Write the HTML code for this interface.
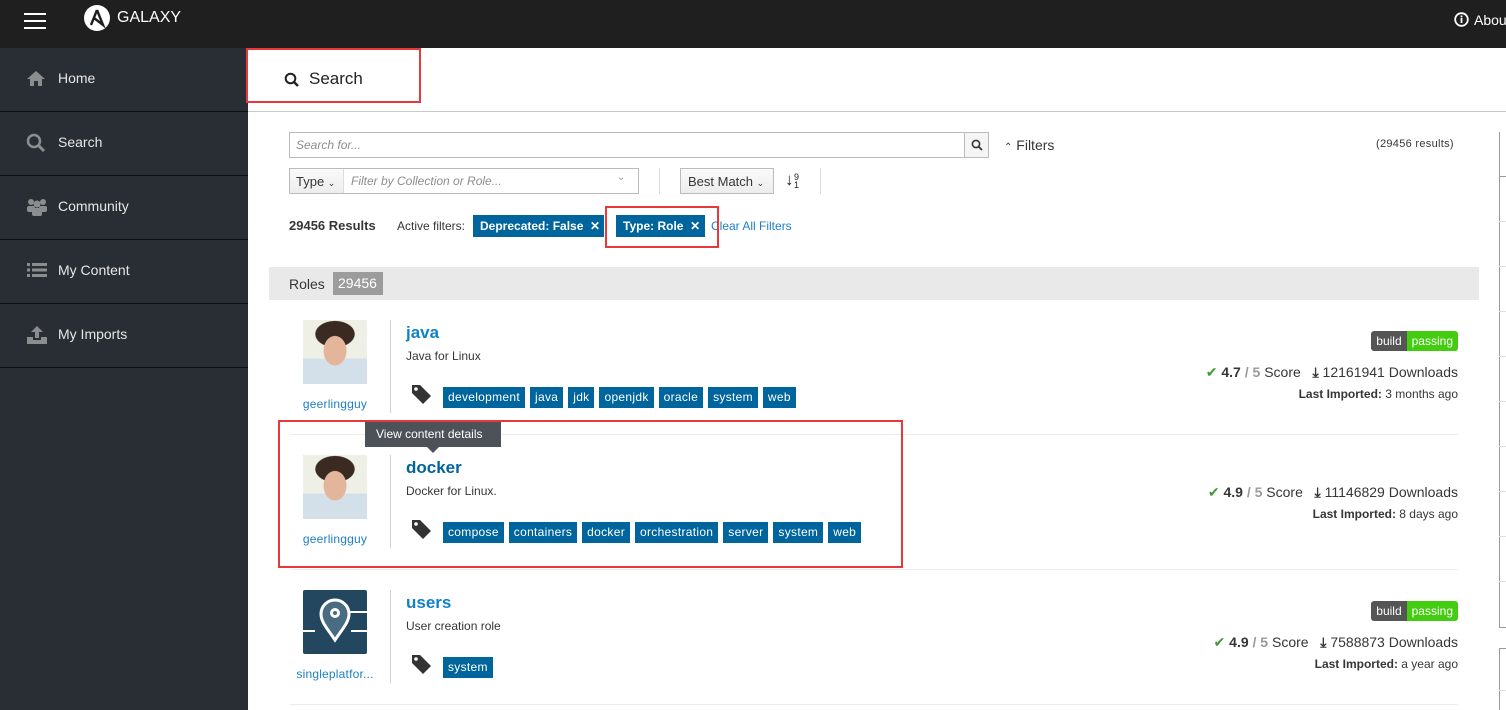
<!DOCTYPE html>
<html><head><meta charset="utf-8"><style>
*{box-sizing:border-box;margin:0;padding:0}
body{width:1506px;height:710px;overflow:hidden;font-family:"Liberation Sans",sans-serif;background:#fff;color:#363636;position:relative;font-size:12px}
.abs{position:absolute}
.top{left:0;top:0;width:1506px;height:48px;background:#1f1f1f}
.side{left:0;top:48px;width:248px;height:662px;background:#292e34}
.si{position:absolute;left:0;width:248px;height:64px;border-bottom:1px solid #0e0f11;color:#e6e6e6;font-size:14px}
.si span{position:absolute;left:58px;top:22px}
.si svg{position:absolute;left:26px;top:21px}
.tag{display:inline-block;background:#00659c;color:#fff;font-size:12px;height:21px;line-height:21px;padding:0 5px;margin-right:5px;letter-spacing:0.3px}
.tags{position:absolute;left:443px;white-space:nowrap}
.av{position:absolute;left:303px;width:64px;height:64px;background:radial-gradient(ellipse 14px 18px at 50% 48%,#e3b69c 80%,transparent 84%),radial-gradient(ellipse 24px 16px at 50% 22%,#3a2a22 80%,transparent 84%),linear-gradient(#eef0e6 0 60%,#d3e0ea 60%)}
.user{position:absolute;left:290px;width:90px;text-align:center;color:#1c7fc2;font-size:12px;letter-spacing:0.2px}
.vl{position:absolute;left:390px;width:1px;background:#d1d1d1}
.title{position:absolute;left:406px;font-size:17px;font-weight:bold;color:#0f82c9}
.desc{position:absolute;left:406px;font-size:12px;color:#363636}
.sep{position:absolute;left:290px;width:1168px;height:1px;background:#ededed}
.right{position:absolute;right:48px;text-align:right;white-space:nowrap}
.badge{position:absolute;right:48px;height:20px;font-size:12px;border-radius:3px;overflow:hidden;display:flex}
.badge b{font-weight:normal;background:#555;color:#fff;padding:0 5px;line-height:20px}
.badge i{font-style:normal;background:#4c1;color:#fff;padding:0 5px;line-height:20px}
.score{font-size:14px;color:#363636}
.red{position:absolute;border:2px solid #e8383b}
.tick{position:absolute;left:1499px;width:7px;height:1px;background:#ddd}
</style></head><body>
<div class="abs top"></div>
<div class="abs" style="left:24px;top:13px;width:22px;height:2px;background:#fff;box-shadow:0 7px 0 #fff,0 14px 0 #fff"></div>
<svg class="abs" style="left:83px;top:4px" width="28" height="28" viewBox="0 0 28 28"><circle cx="14" cy="14" r="13" fill="#fff"/><path d="M14 6 L8 21 M14 6 L20 21 L11 14" stroke="#1f1f1f" stroke-width="2.4" fill="none"/></svg>
<div class="abs" style="left:117px;top:9px;color:#fff;font-size:16px">GALAXY</div>
<svg class="abs" style="left:1454px;top:12px" width="15" height="15"><circle cx="7.5" cy="7.5" r="6.3" fill="none" stroke="#fff" stroke-width="1.8"/><rect x="6.6" y="6" width="1.8" height="5" fill="#fff"/><rect x="6.6" y="3.5" width="1.8" height="1.8" fill="#fff"/></svg>
<div class="abs" style="left:1474px;top:12px;color:#fff;font-size:14px">Abou</div>

<div class="abs side"></div>
<div class="si" style="top:48px;height:64px"><svg width="20" height="18"><path d="M10 2 L1 10 H4 V17 H8 V12 H12 V17 H16 V10 H19 Z" fill="#8b8d8f"/></svg><span>Home</span></div>
<div class="si" style="top:112px"><svg width="20" height="20"><circle cx="8" cy="8" r="6" fill="none" stroke="#8b8d8f" stroke-width="2.5"/><path d="M12.5 12.5 L18 18" stroke="#8b8d8f" stroke-width="3"/></svg><span>Search</span></div>
<div class="si" style="top:176px"><svg width="22" height="20"><circle cx="5" cy="5" r="3" fill="#8b8d8f"/><circle cx="17" cy="5" r="3" fill="#8b8d8f"/><circle cx="11" cy="7" r="3.5" fill="#8b8d8f"/><rect x="1" y="9" width="8" height="6" rx="2" fill="#8b8d8f"/><rect x="13" y="9" width="8" height="6" rx="2" fill="#8b8d8f"/><rect x="6" y="11" width="10" height="8" rx="2" fill="#8b8d8f"/></svg><span>Community</span></div>
<div class="si" style="top:240px"><svg width="22" height="18"><path d="M1 2h3v3H1zM6 2h15v3H6zM1 7.5h3v3H1zM6 7.5h15v3H6zM1 13h3v3H1zM6 13h15v3H6z" fill="#8b8d8f"/></svg><span>My Content</span></div>
<div class="si" style="top:304px"><svg width="22" height="20"><path d="M11 1 L5 7 H9 V13 H13 V7 H17 Z M1 12 H7 V15 H15 V12 H21 V19 H1 Z" fill="#8b8d8f"/></svg><span>My Imports</span></div>

<div class="abs" style="left:248px;top:111px;width:1258px;height:1px;background:#c8c8c8"></div>
<svg class="abs" style="left:284px;top:72px" width="16" height="16"><circle cx="6.5" cy="6.5" r="4.8" fill="none" stroke="#222" stroke-width="2"/><path d="M10 10 L14 14" stroke="#222" stroke-width="2.4"/></svg>
<div class="abs" style="left:309px;top:69px;font-size:17px;color:#222">Search</div>
<div class="red" style="left:246px;top:48px;width:175px;height:55px"></div>

<div class="abs" style="left:289px;top:132px;width:700px;height:26px;border:1px solid #bbb"></div>
<div class="abs" style="left:296px;top:138px;font-size:12px;font-style:italic;color:#8b8d8f">Search for...</div>
<div class="abs" style="left:964px;top:132px;width:25px;height:26px;border:1px solid #bbb;background:#f5f5f5"></div>
<svg class="abs" style="left:971px;top:139px" width="12" height="12"><circle cx="5" cy="5" r="3.6" fill="none" stroke="#333" stroke-width="1.6"/><path d="M7.6 7.6 L11 11" stroke="#333" stroke-width="1.8"/></svg>
<div class="abs" style="left:1004px;top:137px;font-size:14px;color:#363636"><span style="font-size:10px">&#8963;</span> Filters</div>
<div class="abs" style="left:1376px;top:138px;font-size:11px;color:#363636;letter-spacing:0.3px">(29456 results)</div>

<div class="abs" style="left:289px;top:168px;width:350px;height:26px;border:1px solid #bbb"></div>
<div class="abs" style="left:290px;top:169px;width:54px;height:24px;background:linear-gradient(#fafafa,#ededed);border-right:1px solid #ddd;font-size:13px;padding:5px 0 0 6px;color:#363636">Type <span style="font-size:9px">&#8964;</span></div>
<div class="abs" style="left:351px;top:174px;font-size:12px;font-style:italic;color:#8b8d8f">Filter by Collection or Role...</div>
<div class="abs" style="left:617px;top:172px;font-size:10px;color:#999">&#8964;</div>
<div class="abs" style="left:659px;top:168px;width:1px;height:26px;background:#ddd"></div>
<div class="abs" style="left:680px;top:168px;width:94px;height:26px;border:1px solid #bbb;background:linear-gradient(#fafafa,#ededed);font-size:13px;padding:5px 0 0 7px;color:#363636">Best Match <span style="font-size:9px">&#8964;</span></div>
<div class="abs" style="left:785px;top:170px;font-size:17px;font-weight:bold;color:#222">&#8595;</div>
<div class="abs" style="left:794px;top:173px;font-size:9px;line-height:8px;color:#222">9<br>1</div>
<div class="abs" style="left:820px;top:168px;width:1px;height:26px;background:#ddd"></div>

<div class="abs" style="left:289px;top:218px;font-size:13px;font-weight:bold;color:#363636">29456 Results</div>
<div class="abs" style="left:397px;top:219px;font-size:12px;color:#363636">Active filters:</div>
<div class="abs" style="left:473px;top:215px;width:131px;height:22px;background:#00659c;color:#fff;font-weight:bold;font-size:12px;padding:4px 0 0 7px">Deprecated: False &nbsp;✕</div>
<div class="abs" style="left:616px;top:215px;width:89px;height:22px;background:#00659c;color:#fff;font-weight:bold;font-size:12px;padding:4px 0 0 7px">Type: Role &nbsp;✕</div>
<div class="abs" style="left:711px;top:219px;font-size:12px;color:#1c7fc2">Clear All Filters</div>
<div class="red" style="left:605px;top:206px;width:114px;height:42px"></div>

<div class="abs" style="left:269px;top:267px;width:1210px;height:33px;background:#e9e9e9"></div>
<div class="abs" style="left:289px;top:276px;font-size:14px;color:#363636">Roles</div>
<div class="abs" style="left:333px;top:272px;width:50px;height:23px;background:#9c9c9c;color:#fff;font-size:14px;padding:3px 0 0 5px">29456</div>

<div class="abs" style="left:1499px;top:132px;width:1px;height:495px;background:#999"></div>
<div class="abs" style="left:1499px;top:648px;width:1px;height:62px;background:#999"></div>
<div class="abs" style="left:1499px;top:627px;width:7px;height:1px;background:#999"></div>
<div class="abs" style="left:1499px;top:648px;width:7px;height:1px;background:#999"></div>
<div class="abs" style="left:1499px;top:176px;width:7px;height:1px;background:#999"></div>
<div class="tick" style="top:221px"></div><div class="tick" style="top:266px"></div><div class="tick" style="top:311px"></div><div class="tick" style="top:356px"></div><div class="tick" style="top:401px"></div><div class="tick" style="top:446px"></div><div class="tick" style="top:491px"></div><div class="tick" style="top:536px"></div><div class="tick" style="top:581px"></div><div class="tick" style="top:690px"></div>

<!-- row 1 -->
<div class="av" style="top:320px"></div>
<div class="user" style="top:397px">geerlingguy</div>
<div class="vl" style="top:320px;height:93px"></div>
<div class="title" style="top:323px">java</div>
<div class="desc" style="top:349px">Java for Linux</div>
<svg class="abs" style="left:411px;top:384px" width="22" height="20"><path d="M1 1 H9 L20 12 L12 20 L1 9 Z" fill="#333"/><circle cx="5" cy="5" r="1.8" fill="#fff"/></svg>
<div class="tags" style="top:387px"><span class="tag">development</span><span class="tag">java</span><span class="tag">jdk</span><span class="tag">openjdk</span><span class="tag">oracle</span><span class="tag">system</span><span class="tag">web</span></div>
<div class="badge" style="top:331px"><b>build</b><i>passing</i></div>
<div class="right score" style="top:364px"><span style="color:#3f9c35">&#10004;&#xFE0E;</span> <b>4.7</b> <b style="color:#999">/ 5</b> Score &nbsp; <b>&#10515;</b> 12161941 Downloads</div>
<div class="right" style="top:387px;font-size:12px"><b>Last Imported:</b> 3 months ago</div>
<div class="sep" style="top:434px"></div>

<!-- row 2 -->
<div class="av" style="top:455px"></div>
<div class="user" style="top:532px">geerlingguy</div>
<div class="vl" style="top:455px;height:93px"></div>
<div class="title" style="top:458px;color:#00659c">docker</div>
<div class="desc" style="top:484px">Docker for Linux.</div>
<svg class="abs" style="left:411px;top:519px" width="22" height="20"><path d="M1 1 H9 L20 12 L12 20 L1 9 Z" fill="#333"/><circle cx="5" cy="5" r="1.8" fill="#fff"/></svg>
<div class="tags" style="top:522px"><span class="tag">compose</span><span class="tag">containers</span><span class="tag">docker</span><span class="tag">orchestration</span><span class="tag">server</span><span class="tag">system</span><span class="tag">web</span></div>
<div class="right score" style="top:484px"><span style="color:#3f9c35">&#10004;&#xFE0E;</span> <b>4.9</b> <b style="color:#999">/ 5</b> Score &nbsp; <b>&#10515;</b> 11146829 Downloads</div>
<div class="right" style="top:507px;font-size:12px"><b>Last Imported:</b> 8 days ago</div>
<div class="sep" style="top:569px"></div>
<div class="red" style="left:278px;top:420px;width:625px;height:148px"></div>
<div class="abs" style="left:365px;top:422px;width:136px;height:25px;background:#4d5258;color:#fff;font-size:12px;padding:5px 0 0 11px">View content details</div>
<div class="abs" style="left:427px;top:447px;border:6px solid transparent;border-top-color:#4d5258"></div>

<!-- row 3 -->
<div class="abs" style="left:303px;top:590px;width:64px;height:64px;background:#23475f;border-radius:2px"></div>
<svg class="abs" style="left:303px;top:590px" width="64" height="64"><path d="M0 41 H12 M48 41 H64 M46 22 H64" stroke="#fff" stroke-width="2"/><path d="M32 50 C24 38 18 32 18 24 A14 14 0 0 1 46 24 C46 32 40 38 32 50 Z" fill="#4a6c82" stroke="#fff" stroke-width="3"/><circle cx="32" cy="23" r="5" fill="#fff"/><circle cx="32" cy="23" r="2" fill="#4a6c82"/></svg>
<div class="user" style="top:667px">singleplatfor...</div>
<div class="vl" style="top:590px;height:93px"></div>
<div class="title" style="top:593px">users</div>
<div class="desc" style="top:619px">User creation role</div>
<svg class="abs" style="left:411px;top:654px" width="22" height="20"><path d="M1 1 H9 L20 12 L12 20 L1 9 Z" fill="#333"/><circle cx="5" cy="5" r="1.8" fill="#fff"/></svg>
<div class="tags" style="top:657px"><span class="tag">system</span></div>
<div class="badge" style="top:601px"><b>build</b><i>passing</i></div>
<div class="right score" style="top:634px"><span style="color:#3f9c35">&#10004;&#xFE0E;</span> <b>4.9</b> <b style="color:#999">/ 5</b> Score &nbsp; <b>&#10515;</b> 7588873 Downloads</div>
<div class="right" style="top:657px;font-size:12px"><b>Last Imported:</b> a year ago</div>
<div class="sep" style="top:704px"></div>
</body></html>
